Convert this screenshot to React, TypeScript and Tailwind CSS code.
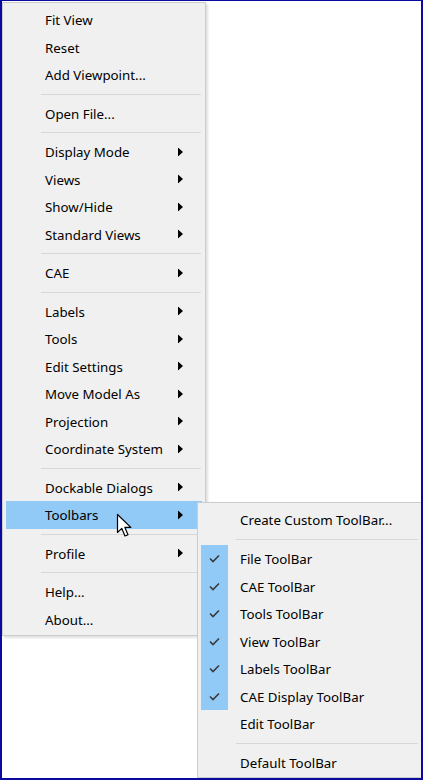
import React from "react";

type Item =
  | { type: "item"; label: string; arrow?: boolean; active?: boolean }
  | { type: "sep" };

const mainItems: Item[] = [
  { type: "item", label: "Fit View" },
  { type: "item", label: "Reset" },
  { type: "item", label: "Add Viewpoint..." },
  { type: "sep" },
  { type: "item", label: "Open File..." },
  { type: "sep" },
  { type: "item", label: "Display Mode", arrow: true },
  { type: "item", label: "Views", arrow: true },
  { type: "item", label: "Show/Hide", arrow: true },
  { type: "item", label: "Standard Views", arrow: true },
  { type: "sep" },
  { type: "item", label: "CAE", arrow: true },
  { type: "sep" },
  { type: "item", label: "Labels", arrow: true },
  { type: "item", label: "Tools", arrow: true },
  { type: "item", label: "Edit Settings", arrow: true },
  { type: "item", label: "Move Model As", arrow: true },
  { type: "item", label: "Projection", arrow: true },
  { type: "item", label: "Coordinate System", arrow: true },
  { type: "sep" },
  { type: "item", label: "Dockable Dialogs", arrow: true },
  { type: "item", label: "Toolbars", arrow: true, active: true },
  { type: "sep" },
  { type: "item", label: "Profile", arrow: true },
  { type: "sep" },
  { type: "item", label: "Help..." },
  { type: "item", label: "About..." },
];

function Arrow() {
  return (
    <svg width="5" height="9" viewBox="0 0 5 9" className="absolute right-[19px] top-1/2 -translate-y-1/2">
      <path d="M0 0 L5 4.5 L0 9 Z" fill="#000" />
    </svg>
  );
}

function Check() {
  return (
    <svg width="11" height="9" viewBox="0 0 11 9">
      <path d="M1 4.5 L4 7.5 L10 1.5" fill="none" stroke="#3a3a3a" strokeWidth="1.6" />
    </svg>
  );
}

const sub: { label: string; checked?: boolean; sepBefore?: boolean }[] = [
  { label: "Create Custom ToolBar..." },
  { label: "File ToolBar", checked: true, sepBefore: true },
  { label: "CAE ToolBar", checked: true },
  { label: "Tools ToolBar", checked: true },
  { label: "View ToolBar", checked: true },
  { label: "Labels ToolBar", checked: true },
  { label: "CAE Display ToolBar", checked: true },
  { label: "Edit ToolBar" },
  { label: "Default ToolBar", sepBefore: true },
];

export default function App() {
  return (
    <div
      className="relative w-[423px] h-[780px] bg-white overflow-hidden border-l-2 border-t border-r-2 border-b-2 border-[#0a0aa0] text-[13.3px] text-black"
      style={{ fontFamily: '"Noto Sans", "Open Sans", sans-serif' }}
    >
      <div className="mt-px w-[204px] bg-[#f0f0f0] border border-[#cccccc] shadow-[2px_2px_2px_rgba(0,0,0,0.12)] px-[3px] pt-[3px] pb-[2px]">
        {mainItems.map((it, i) =>
          it.type === "sep" ? (
            <div key={i} className="h-[11px] flex items-center pl-[35px] pr-[1px]">
              <div className="h-px w-full bg-[#d7d7d7]" />
            </div>
          ) : (
            <div
              key={i}
              className={`relative h-[27.5px] flex items-center pl-[39px] leading-none ${it.active ? "bg-[#91c9f7]" : ""}`}
            >
              <span className="translate-y-[1px]">{it.label}</span>
              {it.arrow && <Arrow />}
            </div>
          )
        )}
      </div>

      {/* Submenu */}
      <div className="absolute left-[195px] top-[501px] w-[226px] bg-[#f0f0f0] border border-[#cccccc] pl-[3px] pt-[3px] pr-[3px]">
        {sub.map((s, i) => (
          <React.Fragment key={i}>
            {s.sepBefore && (
              <div className="h-[11.5px] flex items-center pl-[35px] pr-[1px]">
                <div className="h-px w-full bg-[#d7d7d7]" />
              </div>
            )}
            <div className="relative h-[27.5px] flex items-center leading-none">
              <div className={`w-[27px] h-full flex items-center justify-center ${s.checked ? "bg-[#91c9f7]" : ""}`}>
                {s.checked && <Check />}
              </div>
              <span className="pl-[12px] translate-y-[1px]">{s.label}</span>
            </div>
          </React.Fragment>
        ))}
      </div>

      {/* Cursor */}
      <svg className="absolute left-[114px] top-[512px]" width="18" height="26" viewBox="0 0 18 26">
        <path
          d="M1.5 1.5 L1.5 19.5 L5.8 15.4 L9 23 L12 21.7 L8.9 14.4 L14.8 14.4 Z"
          fill="#fff"
          stroke="#000"
          strokeWidth="1.2"
          strokeLinejoin="round"
        />
      </svg>
    </div>
  );
}
